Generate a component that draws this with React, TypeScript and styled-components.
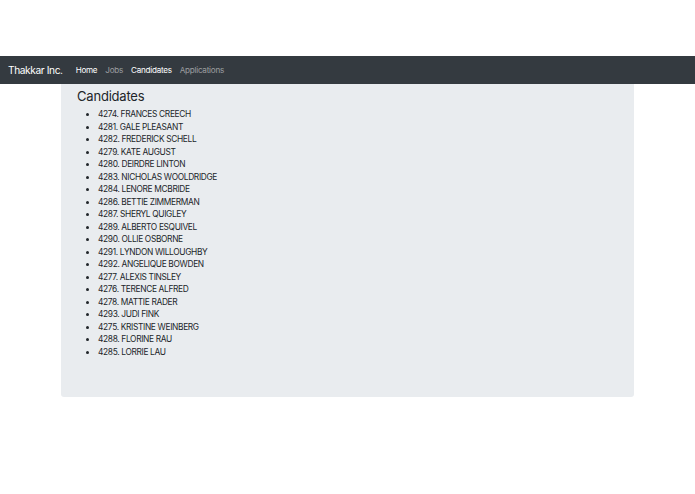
import React from 'react';
import styled, { createGlobalStyle } from 'styled-components';

const GlobalStyle = createGlobalStyle`
  html, body {
    margin: 0;
    padding: 0;
    background: #ffffff;
    font-family: Inter, "Liberation Sans", Arial, sans-serif;
  }
`;

const Page = styled.div`
  padding-top: 56px;
`;

const Navbar = styled.nav`
  display: flex;
  align-items: center;
  height: 28px;
  padding: 0 8px;
  background: #343a40;
`;

const Brand = styled.span`
  font-size: 10.2px;
  color: #ffffff;
  margin-right: 13px;
  letter-spacing: -0.4px;
`;

const NavLinks = styled.div`
  display: flex;
  gap: 8px;
`;

const NavLink = styled.a<{ $active?: boolean }>`
  font-size: 8.1px;
  letter-spacing: -0.25px;
  color: ${(p) => (p.$active ? '#ffffff' : 'rgba(255, 255, 255, 0.5)')};
  text-decoration: none;
  cursor: pointer;
`;

const Container = styled.main`
  width: 573px;
  margin: 0 auto;
`;

const Panel = styled.section`
  background: #e9ecef;
  border-radius: 0 0 3px 3px;
  padding: 4px 16px 39px;
`;

const Title = styled.h1`
  margin: 0 0 4px;
  font-size: 13px;
  font-weight: 400;
  letter-spacing: -0.2px;
  color: #212529;
`;

const List = styled.ul`
  margin: 0;
  padding-left: 21px;
  list-style: disc;
`;

const Item = styled.li`
  font-size: 8.4px;
  line-height: 12.5px;
  letter-spacing: -0.35px;
  color: #212529;
`;

const candidates: [number, string][] = [
  [4274, 'FRANCES CREECH'],
  [4281, 'GALE PLEASANT'],
  [4282, 'FREDERICK SCHELL'],
  [4279, 'KATE AUGUST'],
  [4280, 'DEIRDRE LINTON'],
  [4283, 'NICHOLAS WOOLDRIDGE'],
  [4284, 'LENORE MCBRIDE'],
  [4286, 'BETTIE ZIMMERMAN'],
  [4287, 'SHERYL QUIGLEY'],
  [4289, 'ALBERTO ESQUIVEL'],
  [4290, 'OLLIE OSBORNE'],
  [4291, 'LYNDON WILLOUGHBY'],
  [4292, 'ANGELIQUE BOWDEN'],
  [4277, 'ALEXIS TINSLEY'],
  [4276, 'TERENCE ALFRED'],
  [4278, 'MATTIE RADER'],
  [4293, 'JUDI FINK'],
  [4275, 'KRISTINE WEINBERG'],
  [4288, 'FLORINE RAU'],
  [4285, 'LORRIE LAU'],
];

const App = () => (
  <Page>
    <GlobalStyle />
    <Navbar>
      <Brand>Thakkar Inc.</Brand>
      <NavLinks>
        <NavLink $active>Home</NavLink>
        <NavLink>Jobs</NavLink>
        <NavLink $active>Candidates</NavLink>
        <NavLink>Applications</NavLink>
      </NavLinks>
    </Navbar>
    <Container>
      <Panel>
        <Title>Candidates</Title>
        <List>
          {candidates.map(([id, name]) => (
            <Item key={id}>{`${id}. ${name}`}</Item>
          ))}
        </List>
      </Panel>
    </Container>
  </Page>
);

export default App;
